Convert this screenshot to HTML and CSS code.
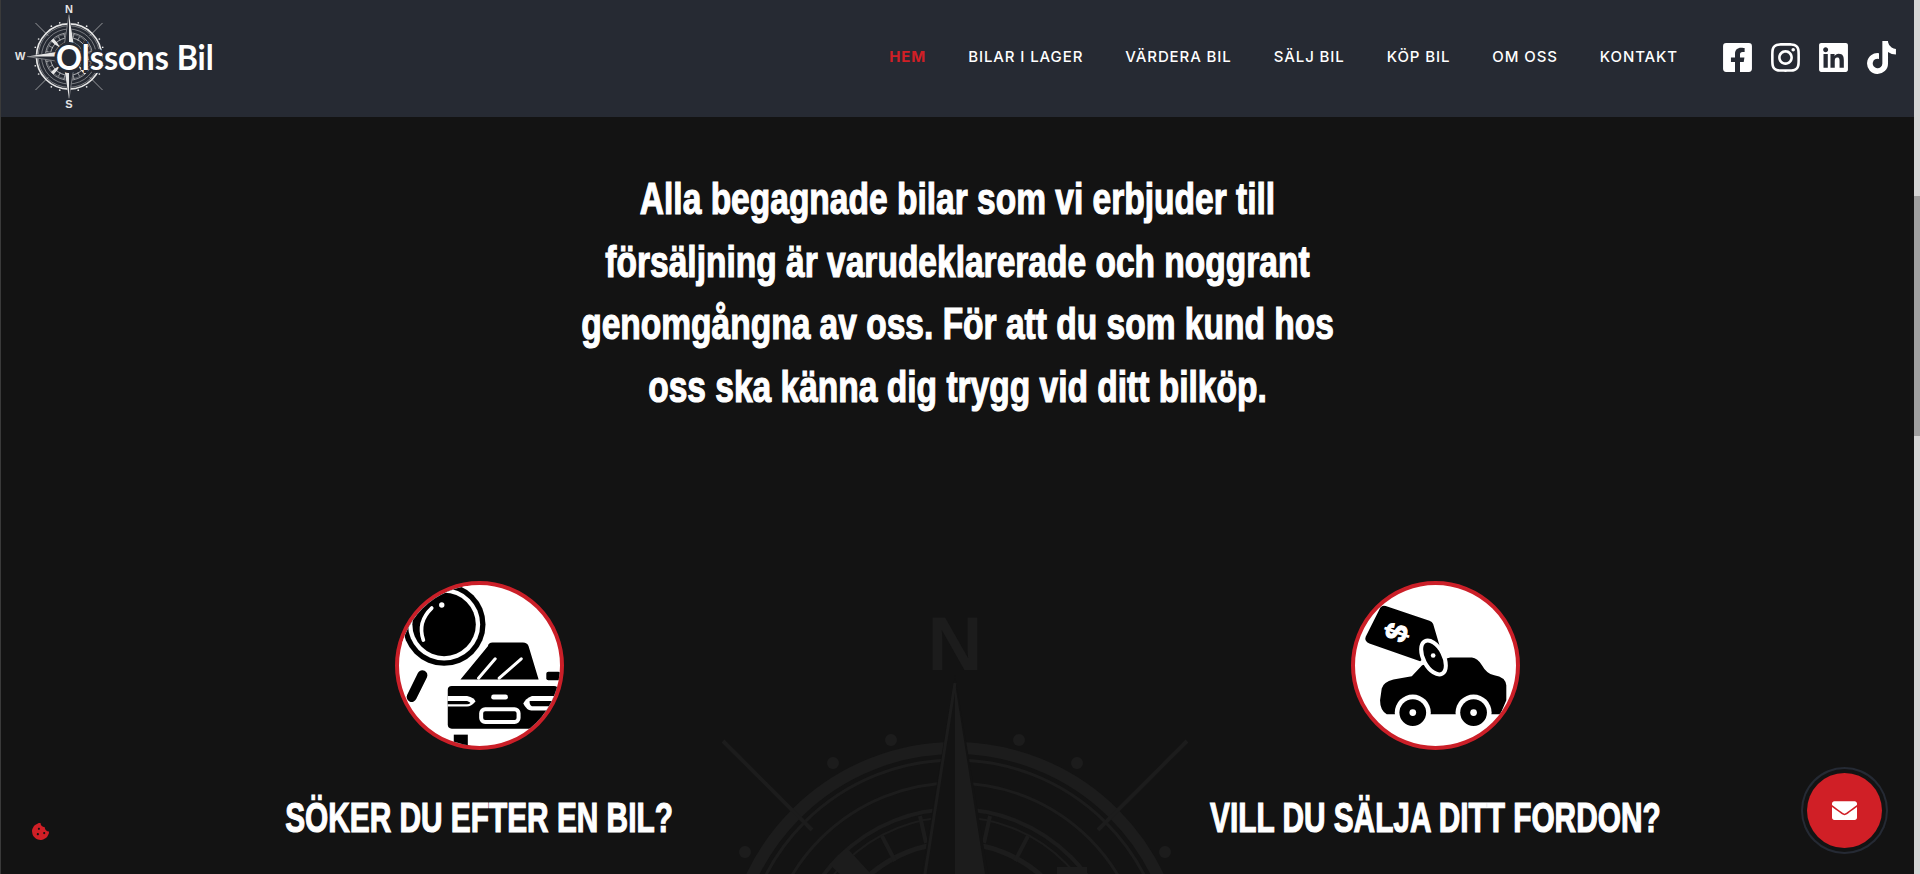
FILE: index.html
```html
<!DOCTYPE html>
<html lang="sv">
<head>
    <meta charset="UTF-8">
    <meta name="viewport" content="width=device-width, initial-scale=1.0">
    <title>Olssons Bil</title>
    <link rel="stylesheet" href="styles.css">
</head>
<body>
    <svg class="defs" width="0" height="0">
        <defs>
            <symbol id="compass" viewBox="-400 -370 800 740">
                <circle r="225" fill="none" stroke="currentColor" stroke-width="12"/>
                <circle r="213" fill="none" stroke="currentColor" stroke-width="3"/>
                <circle r="190" fill="none" stroke="currentColor" stroke-width="3"/>
                <circle r="164" fill="none" stroke="currentColor" stroke-width="4"/>
                <circle r="156" fill="none" stroke="currentColor" stroke-width="2"/>
                <circle r="130" fill="none" stroke="currentColor" stroke-width="5"/>
                <circle r="100" fill="none" stroke="currentColor" stroke-width="3"/>
                <g fill="currentColor">
                    <circle cx="-64" cy="-233" r="6"/><circle cx="64" cy="-233" r="6"/>
                    <circle cx="-122" cy="-210" r="6"/><circle cx="122" cy="-210" r="6"/>
                    <circle cx="-210" cy="-121" r="6"/><circle cx="210" cy="-121" r="6"/>
                    <circle cx="-233" cy="-64" r="6"/><circle cx="233" cy="-64" r="6"/>
                    <circle cx="-64" cy="233" r="6"/><circle cx="64" cy="233" r="6"/>
                    <circle cx="-122" cy="210" r="6"/><circle cx="122" cy="210" r="6"/>
                    <circle cx="-210" cy="121" r="6"/><circle cx="210" cy="121" r="6"/>
                    <circle cx="-233" cy="64" r="6"/><circle cx="233" cy="64" r="6"/>
                </g>
                <g stroke="currentColor" stroke-width="4">
                    <path d="M-232 -232L-143 -143M232 -232L143 -143M-232 232L-143 143M232 232L143 143"/>
                    <path d="M-35 -157L-29 -130M35 -157L29 -130M-73 -137L-60 -112M73 -137L60 -112M-35 157L-29 130M35 157L29 130M-73 137L-60 112M73 137L60 112"/>
                    <path d="M-157 -35L-130 -29M157 -35L130 -29M-137 -73L-112 -60M137 -73L112 -60M-157 35L-130 29M157 35L130 29M-137 73L-112 60M137 73L112 60"/>
                </g>
                <path class="compass-cut" d="M0 -298L50 0L0 298L-50 0ZM-298 0L0 -50L298 0L0 50Z"/>
                <path fill="currentColor" d="M0 -290L44 -10L0 0ZM0 290L-44 10L0 0ZM-290 0L-10 -44L0 0ZM290 0L10 44L0 0Z"/>
                <path fill="none" stroke="currentColor" stroke-width="3" d="M0 -290L-44 -10L0 0M0 290L44 10L0 0M-290 0L-10 44L0 0M290 0L10 -44L0 0"/>
                <path fill="currentColor" d="M-108 -125L-85 -100L-60 -60L-100 -85L-125 -108ZM108 125L85 100L60 60L100 85L125 108ZM-108 125L-85 100L-60 60L-100 85L-125 108Z"/>
                <rect x="102" y="-106" width="30" height="14" fill="currentColor"/>
                <text class="compass-letter" x="0" y="-303">N</text>
                <text class="compass-letter" x="0" y="357">S</text>
                <text class="compass-letter" x="-338" y="27">W</text>
            </symbol>
        </defs>
    </svg>

    <header class="site-header">
        <a class="logo" href="#">
            <svg class="logo-compass"><use href="#compass"/></svg>
            <span class="logo-text">Olssons Bil</span>
        </a>
        <nav class="main-nav">
            <a class="active" href="#">HEM</a>
            <a href="#">BILAR I LAGER</a>
            <a href="#">VÄRDERA BIL</a>
            <a href="#">SÄLJ BIL</a>
            <a href="#">KÖP BIL</a>
            <a href="#">OM OSS</a>
            <a href="#">KONTAKT</a>
        </nav>
        <div class="social">
            <a href="#"><svg viewBox="0 0 448 512"><path d="M400 32H48A48 48 0 0 0 0 80v352a48 48 0 0 0 48 48h137.25V327.69h-63V256h63v-54.64c0-62.15 37-96.48 93.67-96.48 27.14 0 55.52 4.84 55.52 4.84v61h-31.27c-30.81 0-40.42 19.12-40.42 38.73V256h68.78l-11 71.69h-57.78V480H400a48 48 0 0 0 48-48V80a48 48 0 0 0-48-48z"/></svg></a>
            <a href="#"><svg viewBox="0 0 448 512"><path d="M224.1 141c-63.6 0-114.9 51.3-114.9 114.9s51.3 114.9 114.9 114.9S339 319.5 339 255.9 287.7 141 224.1 141zm0 189.6c-41.1 0-74.7-33.5-74.7-74.7s33.5-74.7 74.7-74.7 74.7 33.5 74.7 74.7-33.6 74.7-74.7 74.7zm146.4-194.3c0 14.9-12 26.8-26.8 26.8-14.9 0-26.8-12-26.8-26.8s12-26.8 26.8-26.8 26.8 12 26.8 26.8zm76.1 27.2c-1.7-35.9-9.9-67.7-36.2-93.9-26.2-26.2-58-34.4-93.9-36.2-37-2.1-147.9-2.1-184.9 0-35.8 1.7-67.6 9.9-93.9 36.1s-34.4 58-36.2 93.9c-2.1 37-2.1 147.9 0 184.9 1.7 35.9 9.9 67.7 36.2 93.9s58 34.4 93.9 36.2c37 2.1 147.9 2.1 184.9 0 35.9-1.7 67.7-9.9 93.9-36.2 26.2-26.2 34.4-58 36.2-93.9 2.1-37 2.1-147.8 0-184.8zM398.8 388c-7.8 19.6-22.9 34.7-42.6 42.6-29.5 11.7-99.5 9-132.1 9s-102.7 2.6-132.1-9c-19.6-7.8-34.7-22.9-42.6-42.6-11.7-29.5-9-99.5-9-132.1s-2.6-102.7 9-132.1c7.8-19.6 22.9-34.7 42.6-42.6 29.5-11.7 99.5-9 132.1-9s102.7-2.6 132.1 9c19.6 7.8 34.7 22.9 42.6 42.6 11.7 29.5 9 99.5 9 132.1s2.7 102.7-9 132.1z"/></svg></a>
            <a href="#"><svg viewBox="0 0 448 512"><path d="M416 32H31.9C14.3 32 0 46.5 0 64.3v383.4C0 465.5 14.3 480 31.9 480H416c17.6 0 32-14.5 32-32.3V64.3c0-17.8-14.4-32.3-32-32.3zM135.4 416H69V202.2h66.5V416zm-33.2-243c-21.3 0-38.5-17.3-38.5-38.5S80.9 96 102.2 96c21.2 0 38.5 17.3 38.5 38.5 0 21.3-17.2 38.5-38.5 38.5zm282.1 243h-66.4V312c0-24.8-.5-56.7-34.5-56.7-34.6 0-39.9 27-39.9 54.9V416h-66.4V202.2h63.7v29.2h.9c8.9-16.8 30.6-34.5 62.9-34.5 67.2 0 79.7 44.3 79.7 101.9V416z"/></svg></a>
            <a href="#"><svg viewBox="0 0 448 512"><path d="M448,209.91a210.06,210.06,0,0,1-122.77-39.25V349.38A162.55,162.55,0,1,1,185,188.31V278.2a74.62,74.62,0,1,0,52.23,71.18V0l88,0a121.18,121.18,0,0,0,1.86,22.17h0A122.18,122.18,0,0,0,381,102.39a121.43,121.43,0,0,0,67,20.14Z"/></svg></a>
        </div>
    </header>

    <main class="content">
        <svg class="watermark"><use href="#compass"/></svg>

        <h2 class="intro">Alla begagnade bilar som vi erbjuder till<br>försäljning är varudeklarerade och noggrant<br>genomgångna av oss. För att du som kund hos<br>oss ska känna dig trygg vid ditt bilköp.</h2>

        <section class="choices">
            <div class="choice">
                <div class="choice-icon">
                    <svg viewBox="54 45 482 482">
                        <path d="M320 228Q322 217 334 217H425Q438 217 442 228L472 328H238Z"/>
                        <path class="line" d="M292 324L342 266M354 324L420 266"/>
                        <circle cx="189" cy="163" r="137" class="halo"/>
                        <circle cx="189" cy="163" r="124"/>
                        <circle cx="189" cy="163" r="108" class="halo"/>
                        <circle cx="189" cy="163" r="95"/>
                        <path class="line thick" d="M152 114Q108 156 127 210"/>
                        <circle cx="182" cy="105" r="8" class="halo"/>
                        <path class="stroke-black" d="M124 315L92 380"/>
                        <rect x="495" y="305" width="42" height="25" rx="6"/>
                        <rect x="200" y="347" width="330" height="128" rx="12"/>
                        <rect x="218" y="493" width="42" height="40"/>
                        <path class="halo" d="M200 377H258Q280 382 283 394Q270 409 258 409H200Z"/>
                        <rect class="halo" x="330" y="373" width="50" height="15" rx="7"/>
                        <rect x="300" y="417" width="112" height="38" rx="12" class="grille"/>
                        <path class="halo" d="M530 377H452Q432 385 426 400Q436 420 450 421H530Z"/>
                        <path d="M445 392H530V408H452Q444 404 445 392Z"/>
                        <path d="M200 392H258Q266 395 268 398Q264 402 258 402H200Z"/>
                    </svg>
                </div>
                <h3>SÖKER DU EFTER EN BIL?</h3>
            </div>
            <div class="choice">
                <div class="choice-icon">
                    <svg viewBox="45 45 482 482">
                        <path d="M215 318L246 285L330 262H395Q412 264 425 285Q440 312 462 315Q495 320 498 345V390L480 432H140Q120 420 120 390L125 355Q130 335 160 328Z"/>
                        <path d="M137 108L268 152Q276 155 279 162L298 226L240 273L88 220Q72 213 77 200L118 118Q124 104 137 108Z"/>
                        <ellipse class="tag-loop" cx="280" cy="262" rx="30" ry="55" transform="rotate(-28 280 262)"/>
                        <circle cx="279" cy="256" r="7" class="halo"/>
                        <text class="dollar" transform="translate(170 187) rotate(-70)" y="31">$</text>
                        <circle cx="218" cy="427" r="54" class="halo"/>
                        <circle cx="400" cy="427" r="54" class="halo"/>
                        <circle cx="218" cy="427" r="40"/>
                        <circle cx="400" cy="427" r="40"/>
                        <circle cx="218" cy="427" r="10" class="halo"/>
                        <circle cx="400" cy="427" r="10" class="halo"/>
                    </svg>
                </div>
                <h3>VILL DU SÄLJA DITT FORDON?</h3>
            </div>
        </section>
    </main>

    <a class="cookie" href="#"><svg viewBox="0 0 512 512"><path d="M510.52 255.82c-69.97-.85-126.47-57.69-126.47-127.86-70.17 0-127-56.49-127.86-126.45-27.26-4.14-55.13.3-79.72 12.82l-69.13 35.22a132.221 132.221 0 0 0-57.79 57.81l-35.1 68.88a132.645 132.645 0 0 0-12.82 80.95l12.08 76.27a132.521 132.521 0 0 0 37.16 72.96l54.77 54.76a132.036 132.036 0 0 0 72.71 37.06l76.71 12.15c27.51 4.36 55.7-.11 80.53-12.76l69.13-35.21a132.273 132.273 0 0 0 57.79-57.81l35.1-68.88c12.56-24.64 17.01-52.58 12.91-79.91zM176 368c-17.67 0-32-14.33-32-32s14.33-32 32-32 32 14.33 32 32-14.33 32-32 32zm32-160c-17.67 0-32-14.33-32-32s14.33-32 32-32 32 14.33 32 32-14.33 32-32 32zm160 128c-17.67 0-32-14.33-32-32s14.33-32 32-32 32 14.33 32 32-14.33 32-32 32z"/></svg></a>

    <a class="contact-fab" href="#"><svg viewBox="0 0 512 512"><path d="M502.3 190.8c3.9-3.1 9.7-.2 9.7 4.7V400c0 26.5-21.5 48-48 48H48c-26.5 0-48-21.5-48-48V195.6c0-5 5.7-7.8 9.7-4.7 22.4 17.4 52.1 39.5 154.1 113.6 21.1 15.4 56.7 47.8 92.2 47.6 35.7.3 72-32.8 92.3-47.6 102-74.1 131.6-96.3 154-113.7zM256 320c23.2.4 56.6-29.2 73.4-41.4 132.7-96.3 142.8-104.7 173.4-128.7 5.8-4.5 9.2-11.5 9.2-18.9v-19c0-26.5-21.5-48-48-48H48C21.5 64 0 85.5 0 112v19c0 7.4 3.4 14.3 9.2 18.9 30.6 23.9 40.7 32.4 173.4 128.7 16.8 12.2 50.2 41.8 73.4 41.4z"/></svg></a>

    <div class="scrollbar"><div class="scrollbar-thumb"></div></div>
</body>
</html>
```

FILE: styles.css
```css
* {
    box-sizing: border-box;
    margin: 0;
    padding: 0;
}
html, body {
    height: 874px;
    overflow: hidden;
}
body {
    background: #131313;
    color: #fff;
    font-family: 'Inter', sans-serif;
    border-left: 1px solid #3a3a3a;
    padding-right: 6px;
}
a {
    color: inherit;
    text-decoration: none;
}
.defs {
    position: absolute;
}
.compass-cut {
    fill: var(--compass-bg);
}
.compass-letter {
    fill: currentColor;
    font-family: 'Liberation Sans', sans-serif;
    font-weight: 700;
    font-size: 76px;
    text-anchor: middle;
}

/* header */
.site-header {
    height: 117px;
    background: #262a33;
    display: flex;
    align-items: center;
    padding: 0 18px 0 0;
    --compass-bg: #262a33;
}
.logo {
    position: relative;
    display: block;
    width: 240px;
    height: 117px;
    margin-right: auto;
}
.logo-compass {
    position: absolute;
    left: 10px;
    top: 3px;
    width: 116px;
    height: 107px;
    color: #e6e6e6;
}
.logo-text {
    position: absolute;
    left: 55px;
    top: 33px;
    font-family: 'Lato', sans-serif;
    font-weight: 700;
    font-size: 35px;
    line-height: 46px;
    white-space: nowrap;
    text-shadow: -3px 0 0 #262a33, 0 3px 0 #262a33, 0 -3px 0 #262a33;
    transform: scaleX(0.92);
    transform-origin: left center;
}
/* clean dark counter behind the O */
.logo-text::before {
    content: "";
    position: absolute;
    left: 3px;
    top: 11px;
    width: 24px;
    height: 24px;
    border-radius: 50%;
    background: #262a33;
    z-index: -1;
}
.main-nav {
    display: flex;
    gap: 42px;
    font-size: 15px;
    font-weight: 500;
    letter-spacing: 0.9px;
    margin-right: 45px;
    margin-top: -4px;
}
.main-nav a {
    white-space: nowrap;
}
.main-nav .active {
    color: #d01f26;
    font-weight: 700;
}
.social {
    display: flex;
    gap: 19px;
    margin-top: -3px;
}
.social a {
    display: block;
    width: 29px;
    height: 33px;
}
.social svg {
    display: block;
    width: 29px;
    height: 33px;
    fill: #fff;
}

/* main */
.content {
    position: relative;
    height: 757px;
    overflow: hidden;
    --compass-bg: #131313;
}
.watermark {
    position: absolute;
    left: 554px;
    top: 486px;
    width: 800px;
    height: 740px;
    color: #1c1c1c;
}

/* no condensed font on the box, so squeeze Liberation Sans sideways */
.intro,
.choice h3 {
    font-family: 'Liberation Sans', sans-serif;
    font-weight: 700;
    -webkit-text-stroke: 1.2px #fff;
}
.intro {
    position: relative;
    padding-top: 51px;
    text-align: center;
    font-size: 44px;
    line-height: 62.6px;
    height: 464px;
    transform: scaleX(0.762);
}
.choices {
    position: relative;
    display: grid;
    grid-template-columns: 1fr 1fr;
}
.choice {
    display: flex;
    flex-direction: column;
    align-items: center;
}
.choice-icon {
    width: 169px;
    height: 169px;
    border: 4px solid #cb1f28;
    border-radius: 50%;
    background: #fff;
    overflow: hidden;
}
.choice-icon svg {
    display: block;
    width: 161px;
    height: 161px;
    fill: #000;
}
.choice-icon .halo {
    fill: #fff;
}
.choice-icon .line {
    fill: none;
    stroke: #fff;
    stroke-width: 9;
    stroke-linecap: round;
}
.choice-icon .thick {
    stroke-width: 11;
}
.choice-icon .stroke-black {
    fill: none;
    stroke: #000;
    stroke-width: 30;
    stroke-linecap: round;
}
.choice-icon .grille {
    fill: #000;
    stroke: #fff;
    stroke-width: 12;
}
.choice-icon .tag-loop {
    fill: #000;
    stroke: #fff;
    stroke-width: 12;
}
.choice-icon .dollar {
    fill: #fff;
    stroke: #fff;
    stroke-width: 3;
    font-family: 'Liberation Sans', sans-serif;
    font-weight: 700;
    font-size: 92px;
    text-anchor: middle;
}
.choice h3 {
    margin-top: 44px;
    font-size: 42px;
    line-height: 48px;
    white-space: nowrap;
    transform: scaleX(0.71);
}

/* floating */
.cookie {
    position: fixed;
    left: 32px;
    top: 823px;
    width: 17px;
    height: 17px;
}
.cookie svg {
    display: block;
    fill: #d01f26;
}
.contact-fab {
    position: fixed;
    left: 1807px;
    top: 773px;
    width: 75px;
    height: 75px;
    border-radius: 50%;
    background: #d01f26;
    box-shadow: 0 0 0 4px #131313, 0 0 0 6px #252a34;
    display: flex;
    align-items: center;
    justify-content: center;
}
.contact-fab svg {
    width: 25px;
    height: 25px;
    fill: #fff;
}
.scrollbar {
    position: fixed;
    top: 0;
    right: 0;
    width: 6px;
    height: 874px;
    background: #d6d6d6;
}
.scrollbar-thumb {
    position: absolute;
    top: 196px;
    left: 0;
    width: 6px;
    height: 240px;
    background: #a0a0a0;
}
```
